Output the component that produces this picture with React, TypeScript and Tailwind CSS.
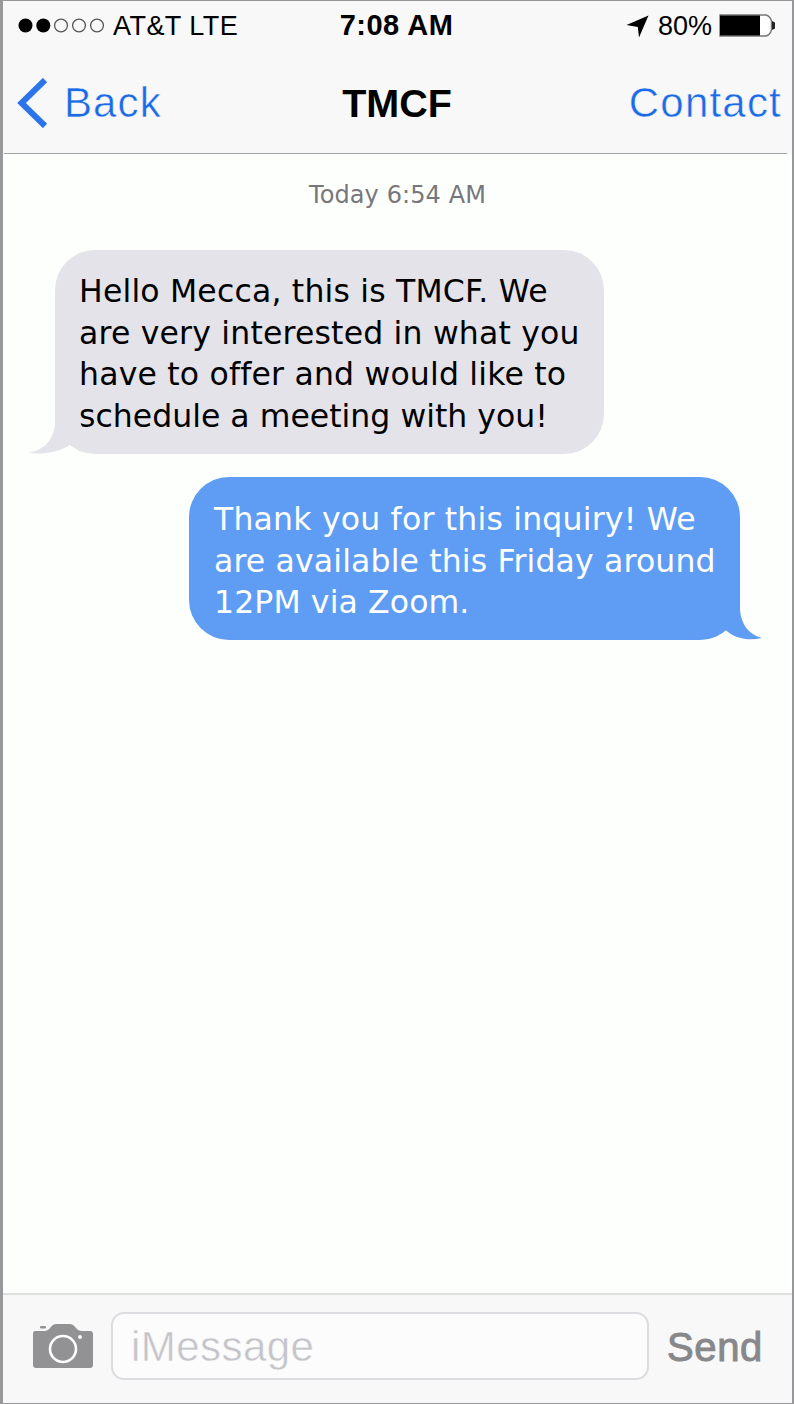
import React from "react";

type Line = { text: string; className: string };

const received: Line[] = [
  { text: "Hello Mecca, this is TMCF. We", className: "tracking-[0.19px]" },
  { text: "are very interested in what you", className: "tracking-[0.19px]" },
  { text: "have to offer and would like to", className: "tracking-[0.19px]" },
  { text: "schedule a meeting with you!", className: "tracking-[0.02px]" },
];

const sent: Line[] = [
  { text: "Thank you for this inquiry! We", className: "tracking-[0.2px]" },
  { text: "are available this Friday around", className: "tracking-[0.15px]" },
  { text: "12PM via Zoom.", className: "tracking-[0.12px]" },
];

function Lines({ lines }: { lines: Line[] }) {
  return (
    <p className="flex flex-col whitespace-nowrap font-['DejaVu_Sans',sans-serif] text-[31.5px] leading-[41.6px]">
      {lines.map((l) => (
        <span key={l.text} className={l.className}>
          {l.text}
        </span>
      ))}
    </p>
  );
}

function StatusBar() {
  return (
    <div className="grid h-[50px] grid-cols-[1fr_auto_1fr] items-center pr-[16px] pl-[14px] text-[27px] text-black">
      <div className="flex items-center">
        <svg width="89" height="18" viewBox="0 0 89 18" className="mr-[7px]">
          <circle cx="8.5" cy="8.5" r="7" fill="#000" />
          <circle cx="26.3" cy="8.5" r="7" fill="#000" />
          <circle cx="44" cy="8.5" r="6.4" fill="none" stroke="#555" strokeWidth="1.3" />
          <circle cx="62" cy="8.5" r="6.4" fill="none" stroke="#555" strokeWidth="1.3" />
          <circle cx="80" cy="8.5" r="6.4" fill="none" stroke="#555" strokeWidth="1.3" />
        </svg>
        <span className="tracking-[0.45px]">AT&amp;T LTE</span>
      </div>
      <span className="text-[29px] font-bold tracking-[0.5px]">7:08 AM</span>
      <div className="flex items-center justify-end">
        <svg width="23" height="23" viewBox="0 0 23 23" className="mr-[9px]">
          <path d="M22.5 0.5 L13 22.5 L11.8 12 L0.5 10 Z" fill="#000" />
        </svg>
        <span>80%</span>
        <svg width="57" height="23" viewBox="0 0 57 23" className="mb-px ml-[7px]">
          <path d="M1 1 H47 Q51 2 52.5 7 V16 Q51 21 47 22 H1 Z" fill="#fff" stroke="#777" strokeWidth="1.4" />
          <rect x="1" y="1.5" width="40" height="20" fill="#000" />
          <path d="M53 7 L56 8.5 V14.5 L53 16 Z" fill="#222" />
        </svg>
      </div>
    </div>
  );
}

export default function App() {
  return (
    <div className="flex h-[1404px] w-[794px] flex-col overflow-hidden border-t border-r-2 border-b border-l-[3px] border-[#98989a] bg-[#fdfffd] font-['Liberation_Sans',sans-serif]">
      <header className="h-[153px] shrink-0 bg-[#f8f8f8]">
        <StatusBar />
        <nav className="mr-[5px] ml-px grid h-[103px] grid-cols-[1fr_auto_1fr] items-center border-b-[1.5px] border-[#a3a3a6] pt-[1px] text-[42px] text-[#1c6be6]">
          <div className="flex items-center pl-[13px]">
            <svg width="31" height="50" viewBox="0 0 31 50">
              <path d="M28 2 L4.5 25 L28 48" fill="none" stroke="#2b74ea" strokeWidth="6" />
            </svg>
            <span className="ml-[16px] tracking-[1.1px] [-webkit-text-stroke:0.5px_#f8f8f8]">Back</span>
          </div>
          <h1 className="pt-[3px] pl-[3px] text-[39.5px] font-bold text-black">TMCF</h1>
          <span className="justify-self-end pr-[5px] tracking-[1.2px] [-webkit-text-stroke:0.5px_#f8f8f8]">Contact</span>
        </nav>
      </header>

      <main className="flex flex-1 flex-col">
        <time className="mt-[26px] self-center font-['DejaVu_Sans',sans-serif] text-[24px] leading-[30px] tracking-[0.1px] text-[#77777b]">
          Today 6:54 AM
        </time>
        <div className="relative mt-[40px] ml-[52px] h-[204px] w-[549px] rounded-[40px] bg-[#e4e3e9] pt-[21px] pl-[24px] text-black">
          <Lines lines={received} />
          <svg className="absolute bottom-0 -left-[27px]" width="60" height="54" viewBox="0 0 60 54">
            <path d="M27 0 V24 C26 40 15 51 0 52.5 C15 55 31 52 41 45.5 L56 30 L40 0 Z" fill="#e4e3e9" />
          </svg>
        </div>
        <div className="relative mt-[23px] ml-[186px] h-[163px] w-[551px] rounded-[40px] bg-[#5e9df3] pt-[22px] pl-[25px] text-white">
          <Lines lines={sent} />
          <svg className="absolute -right-[22px] bottom-0" width="55" height="54" viewBox="0 0 55 54">
            <path d="M33 0 V24 C34 38 42 49 55 52 C42 55 29 53 19 44.5 L4 30 L20 0 Z" fill="#5e9df3" />
          </svg>
        </div>
      </main>

      <footer className="flex h-[110px] shrink-0 items-center border-t-2 border-[#dededf] bg-[#f8f8f8] pb-[7px]">
        <svg className="ml-[29px]" width="62" height="46" viewBox="0 0 62 46">
          <path
            d="M3 8 H13 Q16 8 18 5 Q21 1 24 1 H38 Q41 1 44 5 Q46 8 49 8 H58 Q61 8 61 11 V42 Q61 45 58 45 H4 Q1 45 1 42 V11 Q1 8 3 8 Z"
            fill="#929295"
          />
          <rect x="8" y="3" width="6" height="2.5" rx="1" fill="#929295" />
          <circle cx="31" cy="26" r="13" fill="none" stroke="#fff" strokeWidth="2.6" />
          <circle cx="48" cy="14" r="2" fill="#f8f8f8" />
        </svg>
        <div className="ml-[17px] flex h-[68px] w-[538px] items-center rounded-[13px] border-2 border-[#dcdce1] bg-[#fcfcfc] pl-[18px] text-[42px] text-[#c4c4c9]">
          <span className="pt-[1px] tracking-[0.45px] [-webkit-text-stroke:0.5px_#fcfcfc]">iMessage</span>
        </div>
        <span className="ml-[18px] pt-[2px] text-[40px] tracking-[0.6px] text-[#88888b] [-webkit-text-stroke:1px_#88888b]">Send</span>
      </footer>
    </div>
  );
}
